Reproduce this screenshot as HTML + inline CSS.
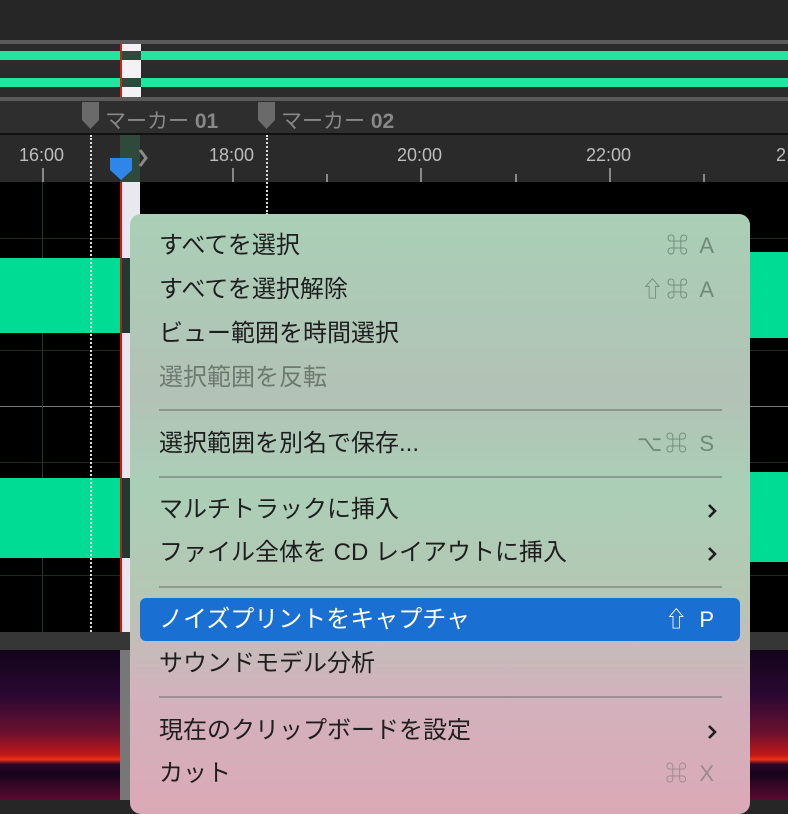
<!DOCTYPE html>
<html><head><meta charset="utf-8"><style>
*{margin:0;padding:0;box-sizing:border-box}
body{width:788px;height:800px;overflow:hidden;background:#262626;position:relative;font-family:"Liberation Sans","Noto Sans CJK JP",sans-serif}
.a{position:absolute}
.menu{left:130px;top:214px;width:620px;height:600px;border-radius:11px;background:linear-gradient(180deg,#a9cfb6 0%,#b3c2b6 30%,#aacfb7 45%,#b4c8b4 62%,#d2b2bd 80%,#dba9b6 100%)}
.it{position:absolute;left:29px;font-size:24px;color:#1e1e1e;line-height:1;white-space:nowrap}
.dis{color:#6e7a70}
.sc{position:absolute;right:33px;font-size:22px;color:#6f8a78;line-height:1;letter-spacing:3px;white-space:nowrap}
.chev{position:absolute;right:32px;width:12px;height:18px}
.sep{position:absolute;left:29px;right:28px;height:2px;background:rgba(90,100,95,.45)}
.tick{position:absolute;color:#bdbdbd;font-size:18px}
</style></head><body>
<div class="a" style="left:0;top:40px;width:788px;height:4px;background:#5a5a5a"></div>
<div class="a" style="left:0;top:44px;width:788px;height:53px;background:#2b2b2b"></div>
<div class="a" style="left:0;top:51px;width:788px;height:9px;background:#22e5a0"></div>
<div class="a" style="left:0;top:78px;width:788px;height:9px;background:#22e5a0"></div>
<div class="a" style="left:120px;top:44px;width:21px;height:53px;background:#f2f2f4"></div>
<div class="a" style="left:120px;top:51px;width:21px;height:9px;background:#2e4a3c"></div>
<div class="a" style="left:120px;top:78px;width:21px;height:9px;background:#2e4a3c"></div>
<div class="a" style="left:120px;top:44px;width:2px;height:53px;background:#d02020"></div>
<div class="a" style="left:0;top:97px;width:788px;height:4px;background:#5a5a5a"></div>
<div class="a" style="left:0;top:101px;width:788px;height:32px;background:#2e2e2e"></div>
<svg class="a" style="left:82px;top:102px" width="18" height="27"><path d="M0 0H17V18L8.5 27L0 18Z" fill="#6a6a6a"/></svg>
<svg class="a" style="left:258px;top:102px" width="18" height="27"><path d="M0 0H17V18L8.5 27L0 18Z" fill="#6a6a6a"/></svg>
<div class="a" style="left:105px;top:105px;font-size:21px;color:#888">マーカー <b>01</b></div>
<div class="a" style="left:281px;top:105px;font-size:21px;color:#888">マーカー <b>02</b></div>
<div class="a" style="left:0;top:133px;width:788px;height:2px;background:#111"></div>
<div class="a" style="left:0;top:135px;width:788px;height:47px;background:#2a2a2a"></div>
<div class="a" style="left:120px;top:135px;width:20px;height:47px;background:#2f4a3d"></div>
<svg class="a" style="left:108px;top:148px" width="42" height="36"><path d="M2 10H24V22L13 32L2 22Z" fill="#2f86e8"/><path d="M32 2L38 10L32 18" stroke="#8a8a8a" stroke-width="3" fill="none"/></svg>
<div class="tick" style="left:19px;top:145px">16:00</div>
<div class="tick" style="left:209px;top:145px">18:00</div>
<div class="tick" style="left:397px;top:145px">20:00</div>
<div class="tick" style="left:586px;top:145px">22:00</div>
<div class="tick" style="left:776px;top:145px">2</div>
<div class="a" style="left:42px;top:168px;width:2px;height:14px;background:#888"></div>
<div class="a" style="left:232px;top:168px;width:2px;height:14px;background:#888"></div>
<div class="a" style="left:420px;top:168px;width:2px;height:14px;background:#888"></div>
<div class="a" style="left:609px;top:168px;width:2px;height:14px;background:#888"></div>
<div class="a" style="left:326px;top:174px;width:2px;height:8px;background:#888"></div>
<div class="a" style="left:515px;top:174px;width:2px;height:8px;background:#888"></div>
<div class="a" style="left:703px;top:174px;width:2px;height:8px;background:#888"></div>
<div class="a" style="left:0;top:182px;width:788px;height:450px;background:#000"></div>
<div class="a" style="left:0;top:238px;width:788px;height:1px;background:#1f2a1f"></div>
<div class="a" style="left:0;top:350px;width:788px;height:1px;background:#1f2a1f"></div>
<div class="a" style="left:0;top:406px;width:788px;height:1px;background:#777"></div>
<div class="a" style="left:0;top:462px;width:788px;height:1px;background:#1f2a1f"></div>
<div class="a" style="left:0;top:575px;width:788px;height:1px;background:#1f2a1f"></div>
<div class="a" style="left:42px;top:182px;width:1px;height:450px;background:#1f3a1f"></div>
<div class="a" style="left:0;top:258px;width:120px;height:75px;background:#00dc94"></div>
<div class="a" style="left:0;top:478px;width:120px;height:80px;background:#00dc94"></div>
<div class="a" style="left:750px;top:252px;width:38px;height:86px;background:#00dc94"></div>
<div class="a" style="left:750px;top:472px;width:38px;height:90px;background:#00dc94"></div>
<div class="a" style="left:120px;top:182px;width:20px;height:450px;background:#e8e8ee"></div>
<div class="a" style="left:120px;top:258px;width:10px;height:75px;background:#1f3a2f"></div>
<div class="a" style="left:120px;top:478px;width:10px;height:80px;background:#1f3a2f"></div>
<div class="a" style="left:120px;top:182px;width:2px;height:450px;background:#d01818"></div>
<div class="a" style="left:90px;top:135px;width:0;height:665px;border-left:2px dotted #ddd"></div>
<div class="a" style="left:266px;top:135px;width:0;height:80px;border-left:2px dotted #ddd"></div>
<div class="a" style="left:0;top:632px;width:788px;height:18px;background:#363636"></div>
<div class="a" style="left:0;top:650px;width:120px;height:150px;background:linear-gradient(180deg,#12041a 0%,#2a0832 30%,#6a1030 55%,#c01818 70%,#f03010 73%,#30082a 76%,#14041c 82%,#5a0a30 100%)"></div>
<div class="a" style="left:120px;top:650px;width:10px;height:150px;background:#777"></div>
<div class="a" style="left:750px;top:650px;width:38px;height:150px;background:linear-gradient(180deg,#12041a 0%,#2a0832 30%,#6a1030 55%,#c01818 70%,#f03010 73%,#30082a 76%,#14041c 82%,#5a0a30 100%)"></div>
<div class="a menu">
<div class="it" style="top:20px">すべてを選択</div><div class="sc" style="top:21px">⌘ A</div>
<div class="it" style="top:64px">すべてを選択解除</div><div class="sc" style="top:65px">⇧⌘ A</div>
<div class="it" style="top:108px">ビュー範囲を時間選択</div>
<div class="it dis" style="top:152px">選択範囲を反転</div>
<div class="sep" style="top:195px"></div>
<div class="it" style="top:218px">選択範囲を別名で保存...</div><div class="sc" style="top:219px">⌥⌘ S</div>
<div class="sep" style="top:262px"></div>
<div class="it" style="top:284px">マルチトラックに挿入</div><svg class="chev" style="top:288px" viewBox="0 0 12 18"><path d="M3 3L9 9L3 15" stroke="#1e1e1e" stroke-width="2.6" fill="none"/></svg>
<div class="it" style="top:327px">ファイル全体を CD レイアウトに挿入</div><svg class="chev" style="top:331px" viewBox="0 0 12 18"><path d="M3 3L9 9L3 15" stroke="#1e1e1e" stroke-width="2.6" fill="none"/></svg>
<div class="sep" style="top:372px"></div>
<div class="a" style="left:10px;top:384px;width:600px;height:43px;background:#1a6fd2;border-radius:6px"></div>
<div class="it" style="top:394px;color:#fff">ノイズプリントをキャプチャ</div><div class="sc" style="top:395px;color:#fff">⇧ P</div>
<div class="it" style="top:438px">サウンドモデル分析</div>
<div class="sep" style="top:482px"></div>
<div class="it" style="top:505px">現在のクリップボードを設定</div><svg class="chev" style="top:509px" viewBox="0 0 12 18"><path d="M3 3L9 9L3 15" stroke="#1e1e1e" stroke-width="2.6" fill="none"/></svg>
<div class="it" style="top:548px">カット</div><div class="sc" style="top:549px;color:#9a8a90">⌘ X</div>
</div>
</body></html>
